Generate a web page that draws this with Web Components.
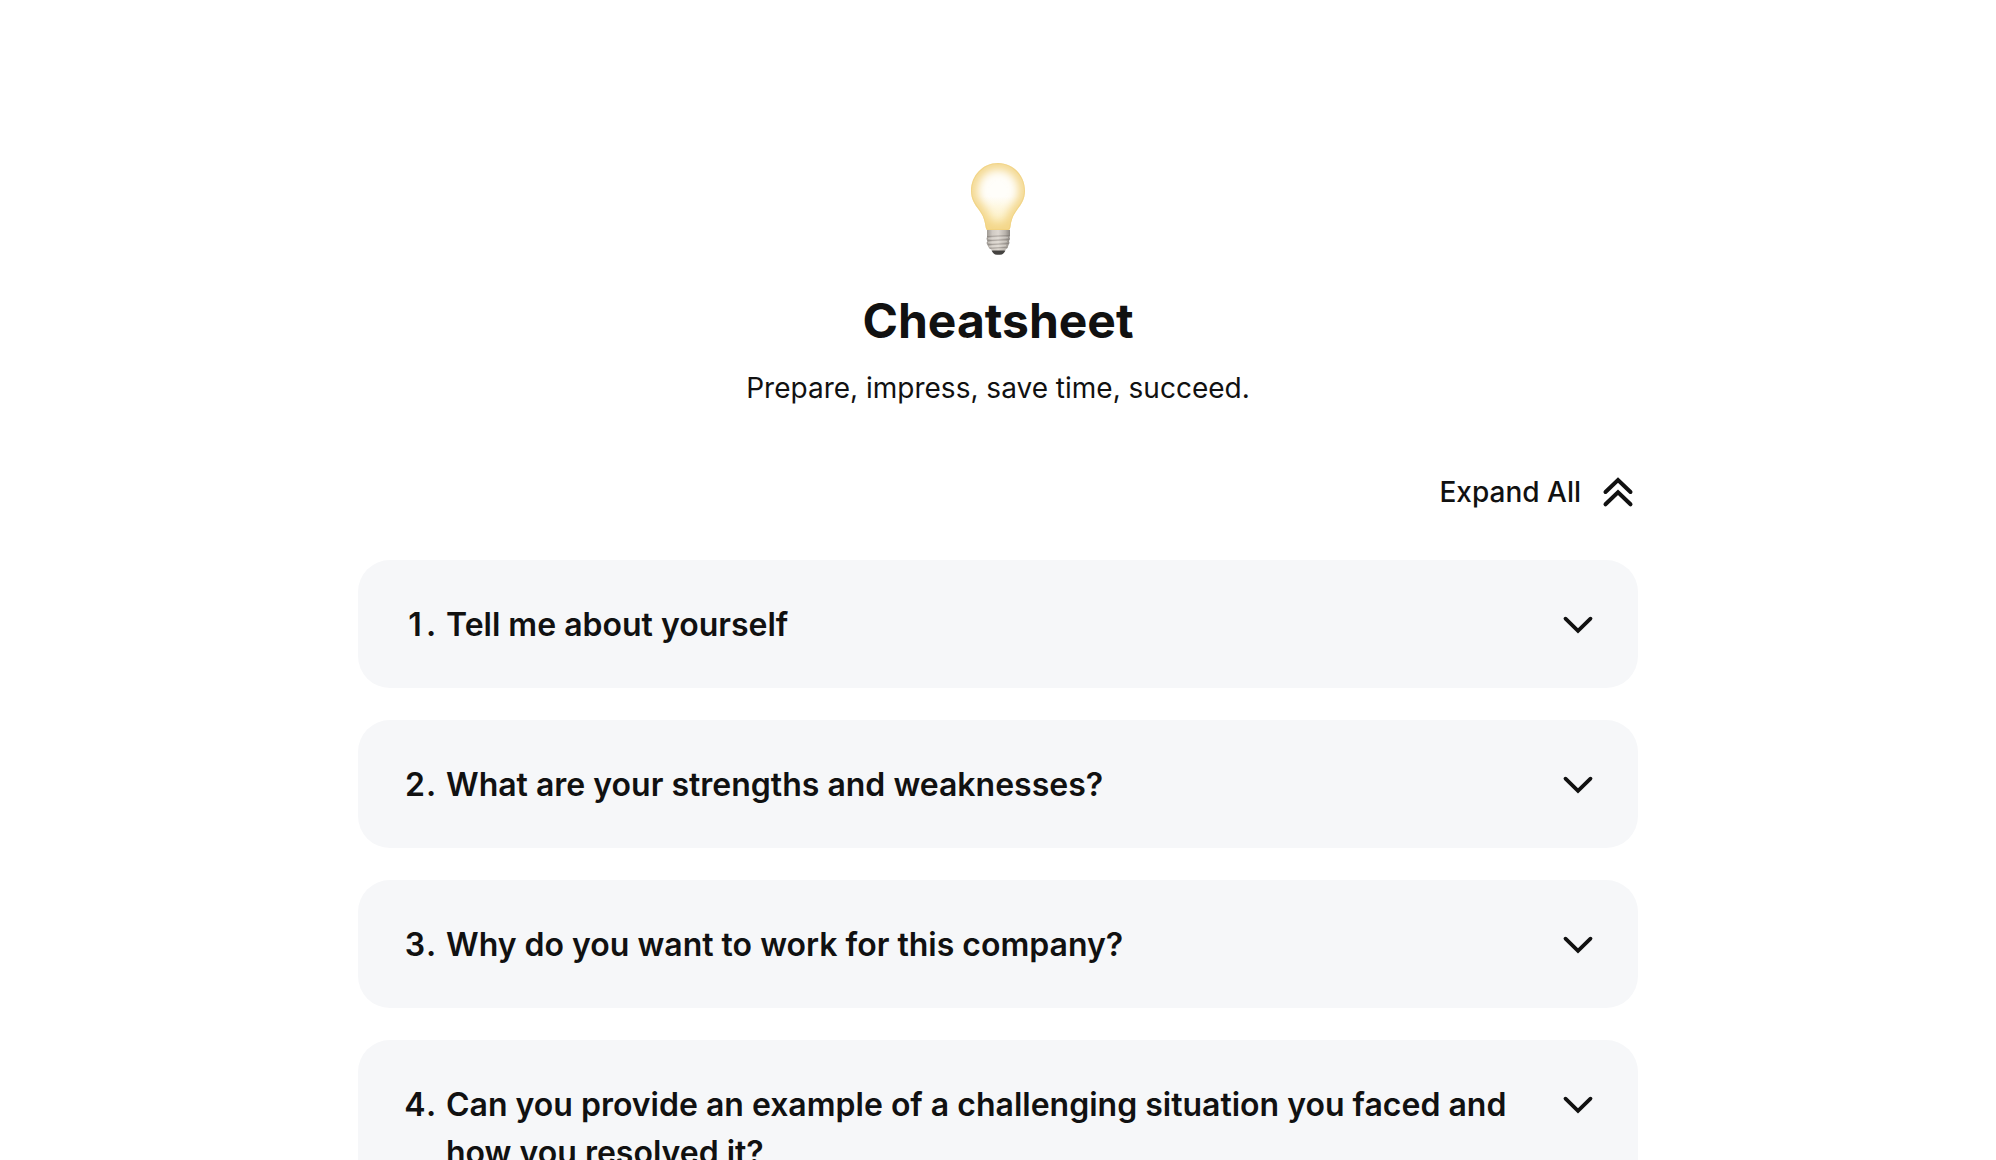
<!DOCTYPE html>
<html lang="en">
<head>
<meta charset="utf-8">
<meta name="viewport" content="width=device-width, initial-scale=1">
<title>Cheatsheet</title>
<style>
  html { scrollbar-width: none; }
  body { margin: 0; background: #fff; color: #111; font-family: Inter, sans-serif; }
</style>
</head>
<body>
<cheat-page>
  <page-hero slot="hero">
    <span slot="title">Cheatsheet</span>
    <span slot="tagline">Prepare, impress, save time, succeed.</span>
  </page-hero>
  <expand-toggle slot="toolbar">Expand All</expand-toggle>
  <question-card number="1">Tell me about yourself</question-card>
  <question-card number="2">What are your strengths and weaknesses?</question-card>
  <question-card number="3">Why do you want to work for this company?</question-card>
  <question-card number="4">Can you provide an example of a challenging situation you faced and how you resolved it?</question-card>
</cheat-page>

<template id="cheat-page">
  <style>
    :host { display: block; padding: 160px 48px 96px; }
    main { display: flex; flex-direction: column; max-width: 1280px; margin: 0 auto; }
    .toolbar { display: flex; justify-content: flex-end; margin: 64px 0 48px; }
    .list { display: flex; flex-direction: column; gap: 32px; }
  </style>
  <main>
    <slot name="hero"></slot>
    <div class="toolbar"><slot name="toolbar"></slot></div>
    <div class="list"><slot></slot></div>
  </main>
</template>

<template id="page-hero">
  <style>
    :host { display: flex; flex-direction: column; align-items: center; text-align: center; }
    svg { display: block; width: 96px; height: 96px; }
    h1 { margin: 32px 0 0; font-size: 48px; line-height: 66px; font-weight: 700; }
    p { margin: 14px 0 0; font-size: 28px; line-height: 40px; font-weight: 400; }
  </style>
  <svg viewBox="0 0 96 96" aria-hidden="true">
    <defs>
      <path id="glass" d="M48 3C32.800 3 21 15.500 21 31C21 39 24.500 44 29 50C33.500 56 34.500 60 35.500 66C36 69 36.300 70 38 70H58C59.700 70 60 69 60.500 66C61.500 60 62.500 56 67 50C71.500 44 75 39 75 31C75 15.500 63.200 3 48 3Z"/>
      <clipPath id="inside"><use href="#glass"/></clipPath>
      <filter id="soft" x="-30%" y="-30%" width="160%" height="160%"><feGaussianBlur stdDeviation="5"/></filter>
      <linearGradient id="warm" x1="0" y1="0" x2="0" y2="1">
        <stop offset=".5" stop-color="#fffefa"/>
        <stop offset=".78" stop-color="#fdf3cf"/>
        <stop offset="1" stop-color="#f8e2a0"/>
      </linearGradient>
      <linearGradient id="metal">
        <stop offset="0" stop-color="#9a958f"/>
        <stop offset=".25" stop-color="#d0cac3"/>
        <stop offset=".5" stop-color="#ddd7d0"/>
        <stop offset=".8" stop-color="#b8b2ab"/>
        <stop offset="1" stop-color="#8a857f"/>
      </linearGradient>
    </defs>
    <use href="#glass" fill="url(#warm)"/>
    <g clip-path="url(#inside)">
      <use href="#glass" fill="none" stroke="#f3d587" stroke-width="12" filter="url(#soft)"/>
      <use href="#glass" fill="none" stroke="#efcd78" stroke-opacity=".55" stroke-width="2"/>
    </g>
    <path fill="url(#metal)" d="M37 70H60V76L59.500 77L60 79L59 81L59.500 83L58.500 85L57.500 88L54 91H43L39 88L37.500 85L36.500 83L37.500 81L36.500 79L37 77Z"/>
    <path fill="none" stroke="#77726d" stroke-opacity=".5" stroke-width="1" d="M37 76.500L59.500 75.500M37 80.700L59 79.500M37.500 84.700L58.500 83.500M39.500 88.300L57.500 87.300"/>
    <path fill="none" stroke="#f4f0eb" stroke-opacity=".35" stroke-width="1" d="M38 78.500L58 77.500M38 82.500L57 81.500M39 86.500L56 85.500"/>
    <path fill="#444240" d="M41.500 90.500H55.500C54 93 53 94.700 50 94.700H47C44 94.700 43 93 41.500 90.500Z"/>
  </svg>
  <h1><slot name="title"></slot></h1>
  <p><slot name="tagline"></slot></p>
</template>

<template id="expand-toggle">
  <style>
    :host { display: block; }
    button { display: flex; align-items: center; gap: 17px; padding: 0; border: 0; background: none; color: inherit; font: 500 28px/40px Inter, sans-serif; cursor: pointer; }
    svg { display: block; width: 40px; height: 40px; }
  </style>
  <button type="button">
    <span><slot></slot></span>
    <svg viewBox="0 0 40 40" fill="none" stroke="currentColor" stroke-width="4" stroke-linecap="round" stroke-linejoin="miter" aria-hidden="true">
      <path d="M7.500 20L20 8L32.500 20M7.500 32.300L20 20.300L32.500 32.300"/>
    </svg>
  </button>
</template>

<template id="question-card">
  <style>
    :host { display: block; }
    button { display: flex; align-items: flex-start; box-sizing: border-box; width: 100%; padding: 41px 40px 39px; border: 0; border-radius: 32px; background: #f6f7f9; color: inherit; font: 600 32px/48px Inter, sans-serif; text-align: left; cursor: pointer; }
    .number { display: flex; flex: 0 0 42px; box-sizing: border-box; padding-left: 6px; }
    .digit { flex: 0 0 22px; text-align: center; }
    .question { flex: 1; padding: 0 32px 0 6px; }
    svg { display: block; flex: none; width: 40px; height: 48px; }
  </style>
  <button type="button" aria-expanded="false">
    <span class="number"><span class="digit"></span>.</span>
    <span class="question"><slot></slot></span>
    <svg viewBox="0 0 40 48" fill="none" stroke="currentColor" stroke-width="3.800" stroke-linecap="round" stroke-linejoin="miter" aria-hidden="true">
      <path d="M7.500 17.700L20 29.900L32.500 17.700"/>
    </svg>
  </button>
</template>

<script>
  class TemplateElement extends HTMLElement {
    constructor() {
      super();
      const template = document.getElementById(this.localName);
      this.attachShadow({ mode: "open" }).append(template.content.cloneNode(true));
    }
  }

  class QuestionCard extends TemplateElement {
    connectedCallback() {
      this.shadowRoot.querySelector(".digit").textContent = this.getAttribute("number");
    }
  }

  customElements.define("cheat-page", class extends TemplateElement {});
  customElements.define("page-hero", class extends TemplateElement {});
  customElements.define("expand-toggle", class extends TemplateElement {});
  customElements.define("question-card", QuestionCard);
</script>
</body>
</html>
